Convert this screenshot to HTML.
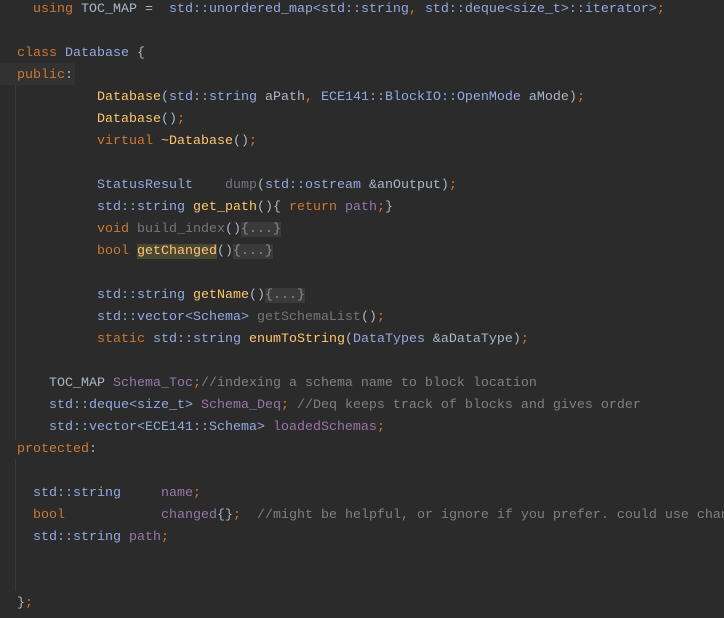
<!DOCTYPE html>
<html><head><meta charset="utf-8"><style>
body{margin:0;background:#2b2b2b;width:724px;height:618px;overflow:hidden;position:relative}
pre{margin:0;position:absolute;left:17px;top:-1px;font-family:"Liberation Mono",monospace;font-size:13.33px;line-height:22px;color:#a9b7c6;white-space:pre}
.k{color:#cc7832}.t{color:#93a9e0}.f{color:#ffc66d}.v{color:#9876aa}.c{color:#808080}.u{color:#74767c}
.fo{background:#3a3a3a;color:#8c8c8c}.h{background:#4a4834}
.cur{position:absolute;left:0;top:63px;width:75px;height:22px;background:#323232}
.g{position:absolute;left:15px;width:1px;background:#3a3a3a}
</style></head><body>
<div class="cur"></div>
<div class="g" style="top:85px;height:355px"></div>
<div class="g" style="top:459px;height:132px"></div>
<pre>  <span class="k">using</span> TOC_MAP =  <span class="t">std::unordered_map&lt;std::string</span><span class="k">,</span> <span class="t">std::deque&lt;size_t&gt;::iterator&gt;</span><span class="k">;</span>

<span class="k">class</span> <span class="t">Database</span> {
<span class="k">public</span>:
          <span class="f">Database</span>(<span class="t">std::string</span> aPath<span class="k">,</span> <span class="t">ECE141::BlockIO::OpenMode</span> aMode)<span class="k">;</span>
          <span class="f">Database</span>()<span class="k">;</span>
          <span class="k">virtual</span> <span class="f">~Database</span>()<span class="k">;</span>

          <span class="t">StatusResult</span>    <span class="u">dump</span>(<span class="t">std::ostream</span> &amp;anOutput)<span class="k">;</span>
          <span class="t">std::string</span> <span class="f">get_path</span>(){ <span class="k">return</span> <span class="v">path</span><span class="k">;</span>}
          <span class="k">void</span> <span class="u">build_index</span>()<span class="fo">{...}</span>
          <span class="k">bool</span> <span class="f h">getChanged</span>()<span class="fo">{...}</span>

          <span class="t">std::string</span> <span class="f">getName</span>()<span class="fo">{...}</span>
          <span class="t">std::vector&lt;Schema&gt;</span> <span class="u">getSchemaList</span>()<span class="k">;</span>
          <span class="k">static</span> <span class="t">std::string</span> <span class="f">enumToString</span>(<span class="t">DataTypes</span> &amp;aDataType)<span class="k">;</span>

    TOC_MAP <span class="v">Schema_Toc</span><span class="k">;</span><span class="c">//indexing a schema name to block location</span>
    <span class="t">std::deque&lt;size_t&gt;</span> <span class="v">Schema_Deq</span><span class="k">;</span> <span class="c">//Deq keeps track of blocks and gives order</span>
    <span class="t">std::vector&lt;ECE141::Schema&gt;</span> <span class="v">loadedSchemas</span><span class="k">;</span>
<span class="k">protected</span>:

  <span class="t">std::string</span>     <span class="v">name</span><span class="k">;</span>
  <span class="k">bool</span>            <span class="v">changed</span>{}<span class="k">;</span>  <span class="c">//might be helpful, or ignore if you prefer. could use change</span>
  <span class="t">std::string</span> <span class="v">path</span><span class="k">;</span>


}<span class="k">;</span></pre>
</body></html>
